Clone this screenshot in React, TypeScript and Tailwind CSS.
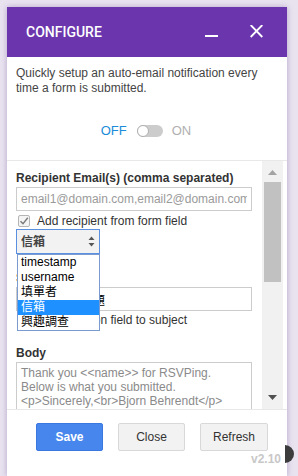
import React from "react";

const fields = ["timestamp", "username", "填單者", "信箱", "興趣調查"];

const CheckBox: React.FC = () => (
    <span className="ml-[2px] w-[12px] h-[12px] border border-[#b5b5b5] bg-[#f4f4f4] rounded-[2px] flex items-center justify-center shrink-0">
        <svg width="10" height="10" viewBox="0 0 10 10">
            <path d="M1.5 5.2 L4 7.8 L8.8 1.8" fill="none" stroke="#7a7a7a" strokeWidth="1.4" />
        </svg>
    </span>
);

const App: React.FC = () => {
    return (
        <div className="relative w-[298px] h-[476px] overflow-hidden bg-[#e9e3f0] pt-[7px] pl-[7px] font-['Liberation_Sans','Noto_Sans_CJK_TC',Arial,sans-serif]">
            <div className="w-[280px] h-[469px] bg-white flex flex-col shadow-[0_0_6px_rgba(90,50,130,0.35)]">

                {/* header */}
                <div className="h-[50px] shrink-0 bg-[#6b36ad] flex items-center pl-[19px] pr-[24px]">
                    <span className="font-['Roboto',sans-serif] font-medium text-[14px] text-white">CONFIGURE</span>
                    <div className="ml-auto flex items-center gap-[32px]">
                        <svg width="13" height="14" viewBox="0 0 13 14">
                            <line x1="0" y1="11" x2="13" y2="11" stroke="white" strokeWidth="2" />
                        </svg>
                        <svg width="13" height="14" viewBox="0 0 13 14">
                            <path d="M0.7 0 L12.3 12 M12.3 0 L0.7 12" stroke="white" strokeWidth="1.8" />
                        </svg>
                    </div>
                </div>

                <p className="px-[9px] pt-[9px] text-[12px] leading-[15px] text-[#444]">
                    Quickly setup an auto-email notification every time a form is submitted.
                </p>

                {/* on/off */}
                <div className="mt-[25px] h-[20px] flex items-center justify-center text-[13px]">
                    <span className="text-[#1a8cd8] ml-[-2px]">OFF</span>
                    <span className="ml-[10px] w-[26px] h-[12px] rounded-full bg-[#cccccc] flex items-center">
                        <span className="w-[12px] h-[12px] rounded-full bg-white border border-[#b0b0b0]"></span>
                    </span>
                    <span className="ml-[9px] text-[#b0b0b0]">ON</span>
                </div>

                {/* scroll area */}
                <div className="mt-[19px] h-[250px] shrink-0 border-t border-b border-[#e8e8e8] flex">
                    <div className="flex-1 overflow-hidden pl-[9px] pt-[10px]">
                        <div className="text-[12px] leading-[14px] font-bold text-[#333]">Recipient Email(s) (comma separated)</div>
                        <input
                            className="mt-[2px] h-[24px] w-[236px] border border-[#cccccc] px-[4px] text-[12px] outline-none placeholder:text-[#9a9a9a]"
                            placeholder="email1@domain.com,email2@domain.com"
                        />
                        <div className="mt-[2px] h-[16px] flex items-center text-[12px] text-[#333]">
                            <CheckBox />
                            <span className="ml-[7px]">Add recipient from form field</span>
                        </div>

                        <div className="relative w-[84px]">
                            <div className="h-[25px] border border-[#5b8fe0] bg-[#f2f2f2] flex items-center pl-[4px] pr-[4px] text-[12px] font-bold text-[#444]">
                                <span>信箱</span>
                                <svg className="ml-auto" width="7" height="11" viewBox="0 0 7 11">
                                    <path d="M3.5 0.5 L6.5 4 L0.5 4 Z M3.5 10.5 L6.5 7 L0.5 7 Z" fill="#555" />
                                </svg>
                            </div>
                            <div className="absolute z-10 top-[25px] left-[1px] w-[83px] border border-[#7a9ad0] bg-white text-[12px] text-black">
                                {fields.map((f) => (
                                    <div
                                        key={f}
                                        className={f === "信箱" ? "h-[15px] leading-[15px] pl-[3px] bg-[#1e90ff] text-white" : "h-[15px] leading-[15px] pl-[3px]"}
                                    >
                                        {f}
                                    </div>
                                ))}
                            </div>
                        </div>

                        <div className="mt-[17px] text-[12px] leading-[14px] font-bold text-[#333]">Subject</div>
                        <input
                            className="mt-[2px] h-[24px] w-[236px] border border-[#cccccc] px-[4px] text-[12px] text-black outline-none"
                            defaultValue="新表單回應主題"
                        />
                        <div className="h-[16px] flex items-center text-[12px] text-[#333]">
                            <CheckBox />
                            <span className="ml-[7px]">Add question field to subject</span>
                        </div>

                        <div className="mt-[18px] text-[12px] leading-[14px] font-bold text-[#333]">Body</div>
                        <textarea
                            className="mt-[2px] h-[80px] w-[236px] border border-[#cccccc] px-[4px] pt-[3px] text-[12px] leading-[14px] text-[#8a8a8a] resize-none outline-none overflow-hidden"
                            defaultValue={"Thank you <<name>> for RSVPing.\nBelow is what you submitted.\n<p>Sincerely,<br>Bjorn Behrendt</p>"}
                        />
                    </div>

                    {/* scrollbar */}
                    <div className="w-[21px] bg-[#f1f1f1] flex flex-col items-center">
                        <svg className="mt-[9px]" width="9" height="5" viewBox="0 0 9 5">
                            <path d="M4.5 0 L9 5 L0 5 Z" fill="#a3a3a3" />
                        </svg>
                        <div className="mt-[7px] w-[17px] h-[100px] bg-[#c1c1c1]"></div>
                        <svg className="mt-auto mb-[9px]" width="9" height="5" viewBox="0 0 9 5">
                            <path d="M0 0 L9 0 L4.5 5 Z" fill="#505050" />
                        </svg>
                    </div>
                    <div className="w-[4px]"></div>
                </div>

                {/* footer */}
                <div className="pt-[13px] pl-[29px] flex gap-[15px] text-[12px]">
                    <button className="w-[67px] h-[28px] rounded-[2px] bg-[#4787ed] border border-[#3a78e0] text-white font-bold">Save</button>
                    <button className="w-[67px] h-[28px] rounded-[2px] bg-[#f2f2f2] border border-[#d8d8d8] text-[#333]">Close</button>
                    <button className="w-[68px] h-[28px] rounded-[2px] bg-[#f2f2f2] border border-[#d8d8d8] text-[#333]">Refresh</button>
                </div>
                <div className="mt-[1px] pr-[6px] text-right text-[12px] leading-[14px] font-bold text-[#c8c8c8]">v2.10</div>
            </div>

            <div className="absolute left-[285px] top-[445px] w-[9px] h-[18px] rounded-r-full bg-[#3c3c3c]"></div>
        </div>
    );
};

export default App;
